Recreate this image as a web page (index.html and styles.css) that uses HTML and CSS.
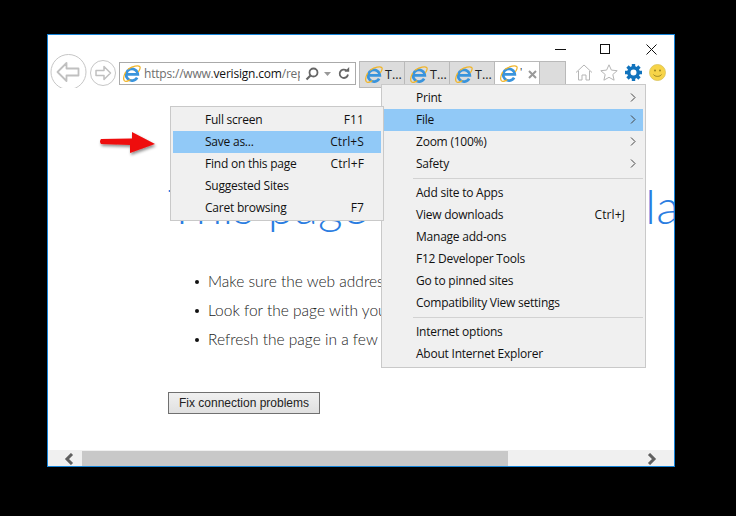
FILE: index.html
```html
<!DOCTYPE html>
<html lang="en">
<head>
<meta charset="utf-8">
<title>Internet Explorer</title>
<link rel="stylesheet" href="styles.css">
</head>
<body>
<svg class="defs" width="0" height="0" aria-hidden="true">
  <symbol id="ie" viewBox="0 0 20 20">
    <path d="M15.700 14A6.500 6.500 0 1 1 16.500 10.500H4.500" fill="none" stroke="#3a94dc" stroke-width="3"/>
    <path d="M6 4.500C11 1.300 16.900.2 18.500 1.700c1.100 1 .3 3.200-1.200 5.500M2.800 8C1 11.500.3 15.800 1.500 17.300c1.100 1.200 3.700.7 6.200-.8" fill="none" stroke="#f0b429" stroke-width="1.400" stroke-linecap="round"/>
  </symbol>
</svg>
<div class="window">
  <div class="titlebar">
    <svg class="caption cap-min" width="12" height="11" viewBox="0 0 12 11"><path d="M0 5.500h11" stroke="#111" fill="none"/></svg>
    <svg class="caption cap-max" width="12" height="11" viewBox="0 0 12 11"><rect x=".5" y=".5" width="9" height="9" stroke="#111" fill="none"/></svg>
    <svg class="caption cap-close" width="12" height="11" viewBox="0 0 12 11"><path d="M.5.500l10 10M10.500.500l-10 10" stroke="#111" fill="none"/></svg>
  </div>
  <div class="toolbar">
    <svg class="nav-back" width="38" height="34" viewBox="0 0 38 34">
      <circle cx="18.500" cy="18" r="17.500" fill="#fff" stroke="#c6c6c6"/>
      <path d="M7.500 18l9-9v5.500h12v7h-12V27z" fill="#fff" stroke="#c0c0c0" stroke-width="1.800" stroke-linejoin="round"/>
    </svg>
    <svg class="nav-fwd" width="26" height="26" viewBox="0 0 26 26">
      <circle cx="13" cy="13" r="12.500" fill="#fff" stroke="#c6c6c6"/>
      <path d="M20.500 13l-6.500-6.500v4H6v5h8v4z" fill="#fff" stroke="#c0c0c0" stroke-width="1.500" stroke-linejoin="round"/>
    </svg>
    <div class="address">
      <svg class="logo" width="18" height="18"><use href="#ie"/></svg>
      <span class="url">https://www.<b>verisign.com</b>/rep</span>
      <svg class="search" width="14" height="14" viewBox="0 0 14 14"><circle cx="8.500" cy="5.500" r="4" fill="none" stroke="#666" stroke-width="1.800"/><path d="M5.500 8.500L1.500 12.500" stroke="#666" stroke-width="2.200"/></svg>
      <svg class="drop" width="7" height="4" viewBox="0 0 7 4"><path d="M0 0h7L3.500 4z" fill="#999"/></svg>
      <svg class="refresh" width="12" height="13" viewBox="0 0 12 13"><path d="M10 7.500a4.200 4.200 0 1 1-1.500-4" fill="none" stroke="#666" stroke-width="1.800"/><path d="M6.500 4.800h4.700V0z" fill="#666"/></svg>
    </div>
    <div class="tabs">
      <div class="tab"><svg class="logo" width="18" height="18"><use href="#ie"/></svg><span class="tab-label">T...</span></div>
      <div class="tab"><svg class="logo" width="18" height="18"><use href="#ie"/></svg><span class="tab-label">T...</span></div>
      <div class="tab"><svg class="logo" width="18" height="18"><use href="#ie"/></svg><span class="tab-label">T...</span></div>
      <div class="tab tab-active"><svg class="logo" width="18" height="18"><use href="#ie"/></svg><span class="tab-label tab-tick">'</span>
        <svg class="tab-close" width="9" height="9" viewBox="0 0 9 9"><path d="M1 1l7 7M8 1L1 8" stroke="#999" stroke-width="2"/></svg></div>
      <div class="tab tab-new"></div>
    </div>
    <div class="tools">
      <svg width="18" height="17" viewBox="0 0 18 17"><path d="M1 8.500L9 1l8 7.500M3.500 7v9h3.500v-5h4v5h3.500V7" fill="#fff" stroke="#b5b5b5"/></svg>
      <svg width="18" height="17" viewBox="0 0 18 17"><path d="M9 .8l2.400 5.300 5.800.6-4.400 3.800 1.300 5.700L9 13.300l-5.100 2.900 1.300-5.700L.8 6.700l5.800-.6z" fill="#fff" stroke="#b5b5b5"/></svg>
      <svg width="17" height="17" viewBox="0 0 17 17"><circle cx="8.500" cy="8.500" r="4.700" fill="none" stroke="#1173bd" stroke-width="3.400"/><path d="M8.500 0v17M0 8.500h17M2.500 2.500l12 12M14.500 2.500l-12 12" stroke="#1173bd" stroke-width="3.400" stroke-dasharray="3.400 10.200"/></svg>
      <svg width="17" height="17" viewBox="0 0 17 17"><circle cx="8.500" cy="8.500" r="8" fill="#f7d448" stroke="#d8c15a" stroke-width=".8"/><circle cx="6" cy="6.500" r="1" fill="#9a8420"/><circle cx="11" cy="6.500" r="1" fill="#9a8420"/><path d="M4.500 10.500c1.500 2.500 6.500 2.500 8 0" fill="none" stroke="#9a8420"/></svg>
    </div>
  </div>
  <main class="page">
    <h1 class="heading">This page can't be displayed</h1>
    <ul class="tips">
      <li class="tip">Make sure the web address is correct.</li>
      <li class="tip">Look for the page with your search engine.</li>
      <li class="tip">Refresh the page in a few minutes.</li>
    </ul>
    <button class="fix" type="button">Fix connection problems</button>
  </main>
  <div class="scrollbar">
    <svg class="sb-arrow" width="10" height="12" viewBox="0 0 10 12"><path d="M8 1L3 6l5 5" fill="none" stroke="#606060" stroke-width="3"/></svg>
    <div class="sb-thumb"></div>
    <svg class="sb-arrow" width="10" height="12" viewBox="0 0 10 12"><path d="M2 1l5 5-5 5" fill="none" stroke="#606060" stroke-width="3"/></svg>
  </div>

  <svg class="red-arrow" width="66" height="34" viewBox="0 0 66 34">
    <defs><filter id="sh" x="-20%" y="-30%" width="140%" height="170%"><feDropShadow dx="1" dy="2" stdDeviation="1.500" flood-color="#000" flood-opacity=".45"/></filter></defs>
    <path d="M4 12L35 11.500 35 5 58 17 33 26 33 18 4 17Q2 14.500 4 12z" fill="#ee0d0d" filter="url(#sh)"/>
  </svg>

  <div class="menu menu-main">
    <div class="item"><span class="label">Print</span><svg class="chev" width="6" height="9" viewBox="0 0 6 9"><path d="M1 .5l4 4-4 4" fill="none" stroke="#444"/></svg></div>
    <div class="item item-on"><span class="label">File</span><svg class="chev" width="6" height="9" viewBox="0 0 6 9"><path d="M1 .5l4 4-4 4" fill="none" stroke="#444"/></svg></div>
    <div class="item"><span class="label">Zoom (100%)</span><svg class="chev" width="6" height="9" viewBox="0 0 6 9"><path d="M1 .5l4 4-4 4" fill="none" stroke="#444"/></svg></div>
    <div class="item"><span class="label">Safety</span><svg class="chev" width="6" height="9" viewBox="0 0 6 9"><path d="M1 .5l4 4-4 4" fill="none" stroke="#444"/></svg></div>
    <div class="sep"></div>
    <div class="item"><span class="label">Add site to Apps</span></div>
    <div class="item"><span class="label">View downloads</span><span class="key">Ctrl+J</span></div>
    <div class="item"><span class="label">Manage add-ons</span></div>
    <div class="item"><span class="label">F12 Developer Tools</span></div>
    <div class="item"><span class="label">Go to pinned sites</span></div>
    <div class="item"><span class="label">Compatibility View settings</span></div>
    <div class="sep"></div>
    <div class="item"><span class="label">Internet options</span></div>
    <div class="item"><span class="label">About Internet Explorer</span></div>
  </div>

  <div class="menu menu-sub">
    <div class="item"><span class="label">Full screen</span><span class="key">F11</span></div>
    <div class="item item-on"><span class="label">Save as...</span><span class="key">Ctrl+S</span></div>
    <div class="item"><span class="label">Find on this page</span><span class="key">Ctrl+F</span></div>
    <div class="item"><span class="label">Suggested Sites</span></div>
    <div class="item"><span class="label">Caret browsing</span><span class="key">F7</span></div>
  </div>
</div>
</body>
</html>
```
FILE: styles.css
```css
* { box-sizing: border-box; }
html, body { margin: 0; height: 100%; }
body {
  background: #000;
  padding: 34px 0 0 47px;
  font-family: "Open Sans", "Noto Sans", sans-serif;
  overflow: hidden;
}
.defs { position: absolute; }
.window {
  position: relative;
  width: 628px;
  height: 433px;
  background: #fff;
  border: 1px solid #1583d8;
  display: flex;
  flex-direction: column;
  overflow: hidden;
}
.titlebar {
  height: 19px;
  flex: none;
  display: flex;
  align-items: flex-start;
  padding-top: 9px;
}
.caption { display: block; flex: none; }
.cap-min { margin-left: 507px; margin-top: 0; }
.cap-max { margin-left: 33px; }
.cap-close { margin-left: 34px; }

.toolbar {
  height: 34px;
  flex: none;
  display: flex;
  align-items: flex-start;
  padding-left: 2px;
}
.nav-back { flex: none; }
.nav-fwd { flex: none; margin: 6px 0 0 2px; }
.address {
  flex: none;
  width: 237px;
  height: 23px;
  margin: 8px 0 0 3px;
  border: 1px solid #aaa;
  display: flex;
  align-items: center;
  padding-left: 3px;
}
.logo { flex: none; }
.url {
  width: 156px;
  margin-left: 3px;
  font-size: 12px;
  letter-spacing: -0.2px;
  color: #6d6d6d;
  white-space: nowrap;
  overflow: hidden;
}
.url b { font-weight: 400; color: #111; }
.search { margin-left: 5px; flex: none; }
.drop { margin-left: 5px; flex: none; }
.refresh { margin-left: 7px; flex: none; }

.tabs {
  flex: none;
  display: flex;
  height: 27px;
  margin: 7px 0 0 3px;
}
.tab {
  width: 45px;
  height: 27px;
  background: #dcdcdc;
  border: 1px solid #b9b9b9;
  border-right: 0;
  display: flex;
  align-items: center;
  padding-left: 5px;
}
.tab-active { background: #fff; height: 26px; }
.tab-new { width: 27px; border-right: 1px solid #b9b9b9; }
.tab-label { margin-left: 2px; font-size: 12.500px; color: #222; }
.tab-tick { margin-left: 2px; font-size: 10px; margin-top: -4px; }
.tab-close { margin-left: 6px; flex: none; }
.tools {
  flex: none;
  display: flex;
  gap: 7px;
  margin: 10px 0 0 9px;
}

.page {
  flex: 1;
  min-height: 0;
  padding: 0 0 0 120px;
  overflow: hidden;
}
.heading {
  margin: 88px 0 0;
  font-family: Lato, "Open Sans", sans-serif;
  font-size: 48px;
  line-height: 60px;
  letter-spacing: 0.35px;
  font-weight: 300;
  color: #2a7de1;
  white-space: nowrap;
}
.tips {
  margin: 31px 0 0 27px;
  padding: 0;
  list-style: none;
  font-family: Lato, "Open Sans", sans-serif;
  font-size: 15.500px;
  line-height: 29px;
  font-weight: 300;
  color: #222;
}
.tip { display: flex; align-items: center; gap: 9px; white-space: nowrap; }
.tip::before {
  content: "";
  width: 4px;
  height: 4px;
  border-radius: 50%;
  background: #111;
}
.fix {
  display: block;
  margin-top: 38px;
  width: 152px;
  height: 22px;
  padding: 0;
  border: 1px solid #707070;
  background: linear-gradient(#f0f0f0, #e0e0e0);
  font: 12px "Liberation Sans", Arial, sans-serif;
  color: #222;
}

.scrollbar {
  flex: none;
  height: 16px;
  background: #f0f0f0;
  display: flex;
  align-items: center;
  padding: 1px 0 0 16px;
}
.sb-arrow { flex: none; }
.sb-thumb {
  width: 426px;
  height: 15px;
  margin: 0 139px 0 8px;
  background: #c8c8c8;
}

.red-arrow { position: absolute; left: 49px; top: 92px; }

.menu {
  position: absolute;
  background: #f0f0f0;
  border: 1px solid #c9c9c9;
  padding: 2px;
  font-size: 12px;
  letter-spacing: -0.23px;
  color: #111;
}
.menu-sub { left: 122px; top: 71px; width: 214px; height: 115px; }
.menu-main { left: 333px; top: 49px; width: 265px; height: 284px; }
.item {
  height: 22px;
  display: flex;
  align-items: center;
  padding: 0 17px 2px 32px;
}
.menu-main .item { padding-right: 7px; }
.menu-main .key { margin-right: 11px; }
.label { flex: 1; }
.key { letter-spacing: 0.1px; }
.item-on { background: #91c9f7; }
.chev { flex: none; }
.sep { height: 1px; margin: 3px 0 3px 29px; background: #d2d2d2; }
```
